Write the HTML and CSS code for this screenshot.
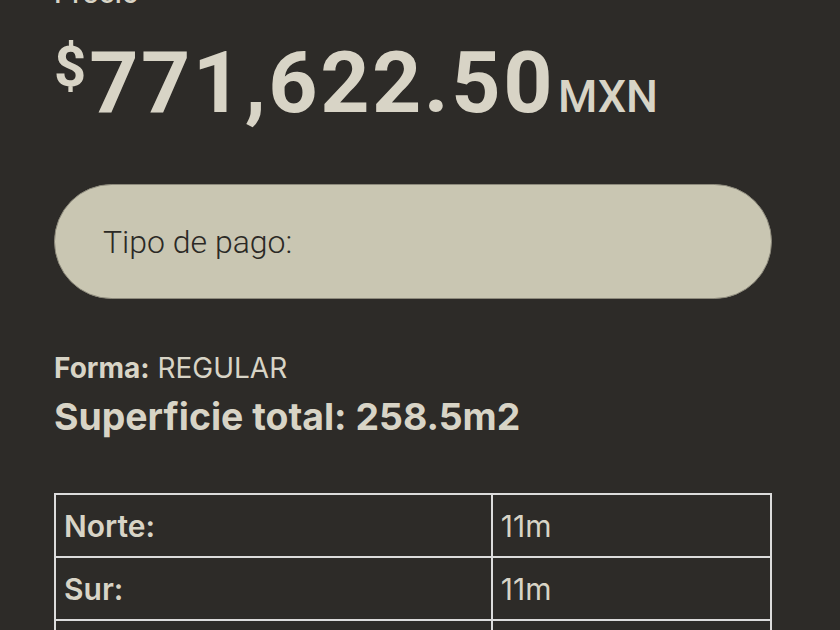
FILE: index.html
```html
<!DOCTYPE html>
<html lang="es">
<head>
<meta charset="utf-8">
<title>Precio</title>
<link rel="stylesheet" href="styles.css">
</head>
<body>
<main class="page">
  <div class="label">Precio</div>
  <div class="price"><span class="cur">$</span><span class="amt">771,622.50</span><span class="unit">MXN</span></div>
  <div class="pill">Tipo de pago:</div>
  <p class="forma"><strong>Forma:</strong> REGULAR</p>
  <p class="superficie">Superficie total: 258.5m2</p>
  <table class="medidas">
    <tr><th>Norte:</th><td>11m</td></tr>
    <tr><th>Sur:</th><td>11m</td></tr>
    <tr><th>Oriente:</th><td>23.5m</td></tr>
    <tr><th>Poniente:</th><td>23.5m</td></tr>
  </table>
</main>
</body>
</html>
```
FILE: styles.css
```css
html, body {
  margin: 0;
  background: #2d2b28;
}
body {
  color: #d8d4c6;
  font-family: "Inter", "Noto Sans", sans-serif;
}
.page {
  padding: 0 68px 40px 54px;
  margin-top: -24px;
}
.label {
  font-size: 28px;
  line-height: 34px;
  font-weight: 500;
}
.price {
  margin-top: 30px;
  font-family: "Roboto", sans-serif;
  font-weight: 700;
  font-size: 86px;
  line-height: 86px;
  height: 86px;
  white-space: nowrap;
}
.amt {
  letter-spacing: 2.5px;
}
.cur {
  font-size: 56px;
  line-height: 0;
  vertical-align: 26px;
  margin-right: 3px;
}
.unit {
  font-size: 45px;
  font-weight: 500;
  line-height: 0;
  margin-left: 3px;
}
.pill {
  margin-top: 58px;
  height: 115px;
  box-sizing: border-box;
  display: flex;
  align-items: center;
  padding: 0 48px;
  background: #c9c6b2;
  border: 1px solid #8d8a7c;
  border-radius: 58px;
  color: #2b2925;
  font-family: "Roboto", sans-serif;
  font-weight: 300;
  font-size: 32px;
}
.forma {
  margin: 52px 0 0;
  font-size: 28px;
  line-height: 34px;
  font-weight: 400;
}
.forma strong {
  font-weight: 700;
}
.superficie {
  margin: 9px 0 0;
  font-size: 37.4px;
  line-height: 46px;
  font-weight: 700;
}
.medidas {
  margin-top: 53px;
  width: 100%;
  border: 1px solid #dcdcdc;
  border-spacing: 0;
  font-size: 30px;
}
.medidas th,
.medidas td {
  border: 1px solid #dcdcdc;
  height: 63px;
  padding: 0 8px;
  text-align: left;
  vertical-align: middle;
  box-sizing: border-box;
}
.medidas th {
  width: 61%;
  font-weight: 600;
}
.medidas td {
  font-weight: 400;
}
```
